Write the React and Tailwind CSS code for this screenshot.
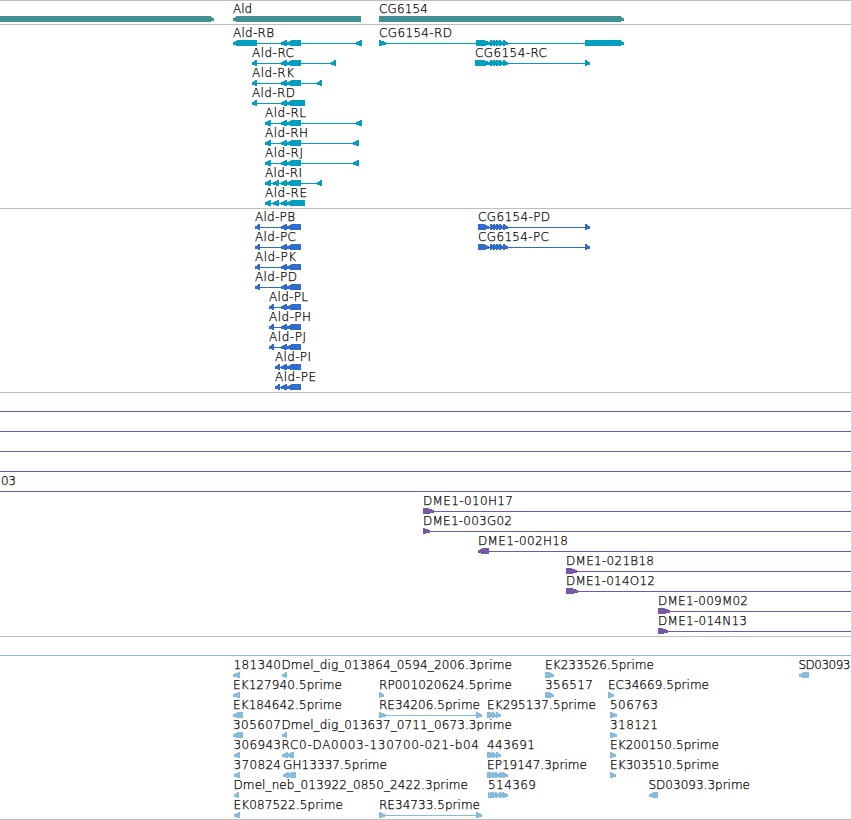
import { clsx } from 'clsx';

const VIEW_WIDTH = 851;

// Exons are [start, end, head]; head is the length of the pointed part, 5-6 for a plain triangle.
const ALD_CORE = [[281, 287, 6], [287, 301, 6]];
const ALD_LONG = [[281, 287, 6], [287, 305, 6]];
const ALD_CDS = [[281, 287, 6], [287, 301, 6]];
const CG_CORE = [[490, 494, 4], [493, 498, 5], [496, 501, 5], [499, 504, 5], [503, 508, 5]];

// Feature: label, label start, label end, direction, exons, optional line end
const TRACKS = [
  {
    key: 'genes',
    color: 'text-[#409096]',
    rows: [
      [
        { dir: 1, exons: [[-5, 214, 5]] },
        { label: 'Ald', x: 233, end: 252, dir: -1, exons: [[233, 361, 5]] },
        { label: 'CG6154', x: 379, end: 428, dir: 1, exons: [[379, 624, 5]] },
      ],
    ],
  },
  {
    key: 'transcripts',
    color: 'text-[#009fc1]',
    rows: [
      [
        { label: 'Ald-RB', x: 233, end: 274, dir: -1, exons: [[233, 257, 6], ...ALD_CORE, [356, 362, 6]] },
        { label: 'CG6154-RD', x: 379, end: 452, dir: 1, exons: [[379, 386, 7], [476, 490, 7], ...CG_CORE, [585, 624, 5]] },
      ],
      [
        { label: 'Ald-RC', x: 252, end: 294, dir: -1, exons: [[252, 257, 5], ...ALD_CORE, [331, 336, 5]] },
        { label: 'CG6154-RC', x: 475, end: 547, dir: 1, exons: [[475, 490, 7], ...CG_CORE, [585, 590, 5]] },
      ],
      [{ label: 'Ald-RK', x: 252, end: 294, dir: -1, exons: [[252, 257, 5], ...ALD_CORE, [317, 322, 5]] }],
      [{ label: 'Ald-RD', x: 252, end: 295, dir: -1, exons: [[252, 257, 5], ...ALD_LONG] }],
      [{ label: 'Ald-RL', x: 265, end: 306, dir: -1, exons: [[265, 271, 6], ...ALD_CORE, [356, 362, 6]] }],
      [{ label: 'Ald-RH', x: 265, end: 308, dir: -1, exons: [[265, 271, 6], ...ALD_CORE, [353, 359, 6]] }],
      [{ label: 'Ald-RJ', x: 265, end: 303, dir: -1, exons: [[265, 271, 6], ...ALD_CORE, [353, 359, 6]] }],
      [{ label: 'Ald-RI', x: 265, end: 302, dir: -1, exons: [[265, 271, 6], [273, 279, 6], ...ALD_CORE, [317, 322, 5]] }],
      [{ label: 'Ald-RE', x: 265, end: 307, dir: -1, exons: [[265, 271, 6], [273, 279, 6], ...ALD_LONG] }],
    ],
  },
  {
    key: 'proteins',
    color: 'text-[#316bcd]',
    rows: [
      [
        { label: 'Ald-PB', x: 255, end: 295, dir: -1, exons: [[255, 260, 5], ...ALD_CDS] },
        { label: 'CG6154-PD', x: 478, end: 550, dir: 1, exons: [[478, 489, 6], ...CG_CORE, [585, 590, 5]] },
      ],
      [
        { label: 'Ald-PC', x: 255, end: 296, dir: -1, exons: [[255, 260, 5], ...ALD_CDS] },
        { label: 'CG6154-PC', x: 478, end: 549, dir: 1, exons: [[478, 489, 6], ...CG_CORE, [585, 590, 5]] },
      ],
      [{ label: 'Ald-PK', x: 255, end: 296, dir: -1, exons: [[255, 260, 5], ...ALD_CDS] }],
      [{ label: 'Ald-PD', x: 255, end: 297, dir: -1, exons: [[255, 260, 5], ...ALD_CDS] }],
      [{ label: 'Ald-PL', x: 269, end: 308, dir: -1, exons: [[269, 274, 5], ...ALD_CDS] }],
      [{ label: 'Ald-PH', x: 269, end: 311, dir: -1, exons: [[269, 274, 5], ...ALD_CDS] }],
      [{ label: 'Ald-PJ', x: 269, end: 306, dir: -1, exons: [[269, 274, 5], ...ALD_CDS] }],
      [{ label: 'Ald-PI', x: 275, end: 311, dir: -1, exons: [[275, 280, 5], ...ALD_CDS] }],
      [{ label: 'Ald-PE', x: 275, end: 316, dir: -1, exons: [[275, 280, 5], ...ALD_CDS] }],
    ],
  },
  {
    key: 'bacs',
    color: 'text-[#7757a8]',
    rows: [
      [{ from: 0, to: VIEW_WIDTH }],
      [{ from: 0, to: VIEW_WIDTH }],
      [{ from: 0, to: VIEW_WIDTH }],
      [{ from: 0, to: VIEW_WIDTH }],
      [{ label: '03', x: 1, end: 16, from: 0, to: VIEW_WIDTH }],
      [{ label: 'DME1-010H17', x: 423, end: 513, dir: 1, exons: [[423, 434, 7]], to: VIEW_WIDTH }],
      [{ label: 'DME1-003G02', x: 423, end: 512, dir: 1, exons: [[423, 430, 7]], to: VIEW_WIDTH }],
      [{ label: 'DME1-002H18', x: 478, end: 568, dir: -1, exons: [[478, 489, 6]], to: VIEW_WIDTH }],
      [{ label: 'DME1-021B18', x: 566, end: 654, dir: 1, exons: [[566, 577, 7]], to: VIEW_WIDTH }],
      [{ label: 'DME1-014O12', x: 566, end: 655, dir: 1, exons: [[566, 578, 7]], to: VIEW_WIDTH }],
      [{ label: 'DME1-009M02', x: 658, end: 748, dir: 1, exons: [[658, 670, 7]], to: VIEW_WIDTH }],
      [{ label: 'DME1-014N13', x: 658, end: 747, dir: 1, exons: [[658, 668, 7]], to: VIEW_WIDTH }],
    ],
  },
  {
    key: 'ests',
    color: 'text-[#87bbdd]',
    last: true,
    rows: [
      [{ from: 0, to: VIEW_WIDTH }],
      [
        { label: '181340', x: 233.5, end: 281, dir: -1, exons: [[233, 240, 7]] },
        { label: 'Dmel_dig_013864_0594_2006.3prime', x: 281.5, end: 512, dir: -1, exons: [[282, 287, 5]] },
        { label: 'EK233526.5prime', x: 545, end: 654, dir: 1, exons: [[545, 554, 6]] },
        { label: 'SD03093', x: 798.5, end: 850.5, dir: -1, exons: [[799, 809, 6]] },
      ],
      [
        { label: 'EK127940.5prime', x: 233, end: 342, dir: -1, exons: [[233, 240, 7]] },
        { label: 'RP001020624.5prime', x: 379, end: 512, dir: 1, exons: [[379, 384, 5]] },
        { label: '356517', x: 545, end: 593, dir: 1, exons: [[545, 554, 6]] },
        { label: 'EC34669.5prime', x: 608, end: 709, dir: 1, exons: [[608, 614, 6]] },
      ],
      [
        { label: 'EK184642.5prime', x: 233, end: 342, dir: -1, exons: [[233, 243, 6]] },
        { label: 'RE34206.5prime', x: 379, end: 480, dir: 1, exons: [[379, 386, 7], [476, 482, 6]] },
        { label: 'EK295137.5prime', x: 487, end: 596, dir: 1, exons: [[487, 491, 4], [489, 494, 5], [492, 497, 5], [496, 501, 5]] },
        { label: '506763', x: 610, end: 658, dir: 1, exons: [[610, 617, 7]] },
      ],
      [
        { label: '305607', x: 233, end: 281, dir: -1, exons: [[233, 243, 6]] },
        { label: 'Dmel_dig_013637_0711_0673.3prime', x: 281.5, end: 512, dir: -1, exons: [[282, 287, 5]] },
        { label: '318121', x: 610, end: 658, dir: 1, exons: [[610, 617, 7]] },
      ],
      [
        { label: '306943', x: 233.5, end: 281, dir: -1, exons: [[234, 240, 6]] },
        { label: 'RC0-DA0003-130700-021-b04', x: 281.5, end: 479, dir: -1, exons: [[282, 288, 6], [287, 294, 6]] },
        { label: '443691', x: 487, end: 535, dir: 1, exons: [[487, 491, 4], [489, 494, 5], [492, 497, 5], [496, 501, 5]] },
        { label: 'EK200150.5prime', x: 610, end: 719, dir: 1, exons: [[610, 616, 6]] },
      ],
      [
        { label: '370824', x: 233.5, end: 281, dir: -1, exons: [[234, 240, 6]] },
        { label: 'GH13337.5prime', x: 283, end: 387, dir: -1, exons: [[283, 289, 6], [287, 296, 6]] },
        { label: 'EP19147.3prime', x: 487, end: 587, dir: 1, exons: [[487, 491, 4], [489, 494, 5], [492, 497, 5], [495, 500, 5], [499, 504, 5], [502, 508, 6]] },
        { label: 'EK303510.5prime', x: 610, end: 719, dir: 1, exons: [[610, 616, 6]] },
      ],
      [
        { label: 'Dmel_neb_013922_0850_2422.3prime', x: 233.5, end: 468, dir: -1, exons: [[234, 239, 5]] },
        { label: '514369', x: 488, end: 536, dir: 1, exons: [[488, 491, 3], [490, 494, 4], [492, 497, 5], [495, 500, 5], [499, 504, 5], [502, 508, 6]] },
        { label: 'SD03093.3prime', x: 648.5, end: 750, dir: -1, exons: [[649, 658, 6]] },
      ],
      [
        { label: 'EK087522.5prime', x: 233.5, end: 343, dir: -1, exons: [[234, 240, 6]] },
        { label: 'RE34733.5prime', x: 379, end: 480, dir: 1, exons: [[379, 385, 6], [476, 482, 6]] },
      ],
    ],
  },
];

function exonPoints([start, end, head], dir) {
  if (dir > 0) {
    const neck = end - head;
    return `${start},15 ${neck + 1},15 ${end},17.5 ${end},19.5 ${neck + 1},21 ${start},21`;
  }
  const neck = start + head;
  return `${end},15 ${neck - 1},15 ${start},17.5 ${start},19.5 ${neck - 1},21 ${end},21`;
}

function Feature({ label, x, end, dir, exons = [], from, to }) {
  const lineStart = from ?? exons[0][0];
  const lineEnd = to ?? exons[exons.length - 1][1];
  const hasLine = to !== undefined || exons.length > 1;

  return (
    <g>
      {hasLine && <rect x={lineStart} y={18} width={lineEnd - lineStart} height={1} />}
      {exons.map((exon) => (
        <polygon key={exon[0]} points={exonPoints(exon, dir)} />
      ))}
      {label && (
        <text x={x} y={12} textLength={end - x} className="fill-black stroke-black [stroke-width:0.25px]">
          {label}
        </text>
      )}
    </g>
  );
}

function Track({ track }) {
  return (
    <section className={clsx('border-b border-[#bebebe]', track.color, track.last ? 'pb-[2px]' : 'pb-[3px]')}>
      {track.rows.map((features, i) => (
        <svg
          key={i}
          width={VIEW_WIDTH}
          height={20}
          fill="currentColor"
          shapeRendering="crispEdges"
          className="block overflow-visible"
        >
          {features.map((feature, j) => (
            <Feature key={j} {...feature} />
          ))}
        </svg>
      ))}
    </section>
  );
}

export default function App() {
  return (
    <main className="h-[820px] w-[851px] overflow-hidden border-t border-[#bebebe] bg-white font-['DejaVu_Sans',sans-serif] text-[12px] font-extralight">
      {TRACKS.map((track) => (
        <Track key={track.key} track={track} />
      ))}
    </main>
  );
}
